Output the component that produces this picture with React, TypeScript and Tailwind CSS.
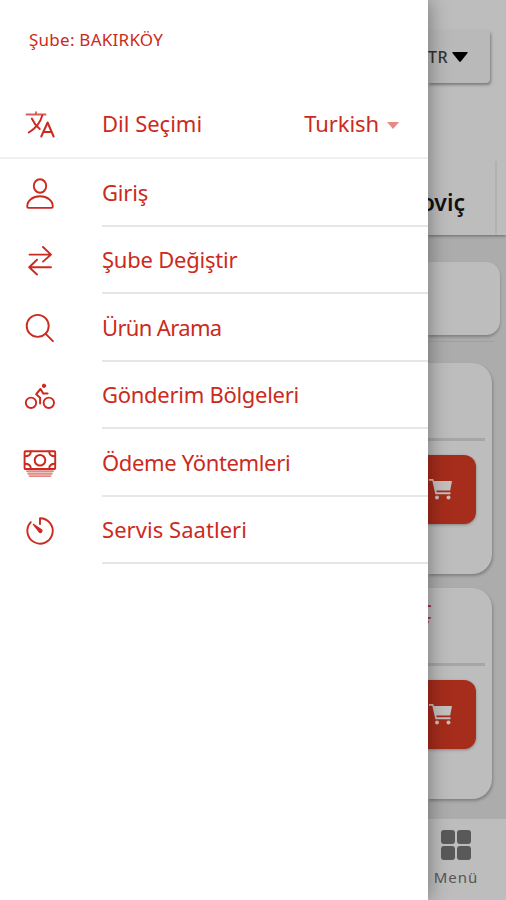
import type { ReactNode } from 'react';

interface MenuItem {
  label: string;
  icon: ReactNode;
  spacing: string;
}

function Icon({ children }: { children: ReactNode }) {
  return (
    <svg
      viewBox="0 0 36 36"
      className="w-9 h-9 shrink-0"
      fill="none"
      stroke="currentColor"
      strokeWidth="1.9"
      strokeLinecap="round"
      strokeLinejoin="round"
    >
      {children}
    </svg>
  );
}

const TranslateIcon = () => (
  <Icon>
    <path d="M4.5 8.5h19M14 6.200v2.300" strokeOpacity="0.75" />
    <path d="M9.800 12.500c2 4.500 4.600 7.700 8 10.500M20.300 9.300c-1.800 7-6.500 13-13.500 17.200" />
    <path d="M19.3 30.5 25.6 16.500l6 14M21.5 26h8.3" strokeWidth="2" />
  </Icon>
);

const PersonIcon = () => (
  <Icon>
    <ellipse cx="18" cy="11" rx="6.2" ry="6.7" />
    <path d="M5.2 31.5C5.2 25.5 10.5 21.3 18 21.3s12.8 4.2 12.8 10.2c0 .9-.5 1.4-1.4 1.4H6.6c-.9 0-1.4-.5-1.4-1.4Z" />
  </Icon>
);

const SwapIcon = () => (
  <Icon>
    <path d="M7.5 12.6h21.5M21 5l8 7.6-8 7M29 25.2H7.2M15 17.7l-7.8 7.5 7.8 7.3" />
  </Icon>
);

const SearchIcon = () => (
  <Icon>
    <circle cx="15.7" cy="15.9" r="11" />
    <path d="m23.7 23.9 7.2 7.2" strokeWidth="2" />
  </Icon>
);

const BicycleIcon = () => (
  <Icon>
    <circle cx="9" cy="25.8" r="5.2" />
    <circle cx="26.8" cy="25.8" r="5.2" />
    <circle cx="22" cy="8.8" r="1.7" fill="currentColor" strokeWidth="1" />
    <path d="m18.500 12-4.300 5.200 3.900 3.500v5.800M18.700 12.200l2.500 4.300h4.400" strokeWidth="2" />
  </Icon>
);

const CashIcon = () => (
  <Icon>
    <rect x="2.6" y="6.2" width="30.6" height="17.8" rx="0.8" />
    <circle cx="18" cy="15.2" r="5.3" strokeWidth="2" />
    <path d="M8.8 6.5c0 3-2.3 4.8-6 4.8M27.2 6.5c0 3 2.3 4.8 6 4.8M8.8 23.6c0-3-2.3-4.8-6-4.8M27.2 23.6c0-3 2.3-4.8 6-4.8" />
    <path d="M5 26.2h26M6.300 28.7h23.400M7.5 31.100h21" strokeWidth="1.9" strokeOpacity="0.55" />
  </Icon>
);

const TimerIcon = () => (
  <Icon>
    <path d="M18 12V6.2a12.7 12.7 0 1 1-9.2 4" />
    <path d="M11.300 12.300 19.500 17.700a1.500 1.500 0 0 1-2.300 2.300Z" fill="currentColor" strokeWidth="1.2" />
  </Icon>
);

const CartIcon = () => (
  <svg viewBox="0 0 24 22" className="w-6 h-[22px] shrink-0" fill="#c4c0bf">
    <path d="M0 0h4.2l.7 2H23l-1.8 9.500H7.300l.4 1.800h13.800v1.900H6.400L3.300 1.800H0Z" />
    <circle cx="8" cy="18.500" r="2" />
    <circle cx="19.500" cy="18.500" r="2" />
  </svg>
);

const items: MenuItem[] = [
  { label: 'Giriş', icon: <PersonIcon />, spacing: 'tracking-[-0.2px]' },
  { label: 'Şube Değiştir', icon: <SwapIcon />, spacing: 'tracking-[-0.23px]' },
  { label: 'Ürün Arama', icon: <SearchIcon />, spacing: 'tracking-[-0.65px]' },
  { label: 'Gönderim Bölgeleri', icon: <BicycleIcon />, spacing: 'tracking-[-0.28px]' },
  { label: 'Ödeme Yöntemleri', icon: <CashIcon />, spacing: 'tracking-[-0.35px]' },
  { label: 'Servis Saatleri', icon: <TimerIcon />, spacing: 'tracking-[0.05px]' },
];

function Drawer() {
  return (
    <nav className="relative z-10 w-[428px] shrink-0 bg-white text-[#cb2a20] shadow-[0_0_20px_rgba(0,0,0,0.4)]">
      <div className="h-[91px] pl-[29px] pt-[28px] text-[17px] leading-6 tracking-[0.25px]">Şube: BAKIRKÖY</div>

      <div className="flex items-center h-[68px] pl-[22px] pr-[29px] border-b-2 border-[#f0f0f0]">
        <TranslateIcon />
        <span className="ml-11 mb-px flex-1 text-[22px]">Dil Seçimi</span>
        <span className="mb-px text-[22px] tracking-[-0.1px]">Turkish</span>
        <svg viewBox="0 0 12 7" className="ml-2 mt-0.5 w-3 h-[7px]" fill="#e58a84">
          <path d="M0 0h12L6 7Z" />
        </svg>
      </div>

      {items.map((item) => (
        <div key={item.label} className="flex items-center h-[67.5px] pl-[22px]">
          {item.icon}
          <div className="ml-11 flex flex-1 items-center h-full pt-px border-b-2 border-[#e6e6e6]">
            <span className={`text-[22px] whitespace-nowrap ${item.spacing}`}>{item.label}</span>
          </div>
        </div>
      ))}
    </nav>
  );
}

function ProductCard({ title }: { title?: string }) {
  return (
    <div className="h-[211px] mr-[14px] rounded-r-[20px] bg-[#bdbdbd] shadow-[1px_2px_3px_rgba(0,0,0,0.25)]">
      <div className="h-[78px] mr-[7px] border-b-3 border-[#a6a6a6] overflow-hidden">
        <div className="flex w-1 justify-end pt-[10px] text-[20px] leading-7 text-[#a01525]">{title}</div>
      </div>
      <div className="flex items-center mt-[14px] w-12 h-[69px] pl-px rounded-r-xl bg-[#a62c1b] shadow-[0_1px_3px_rgba(0,0,0,0.3)]">
        <CartIcon />
      </div>
    </div>
  );
}

function Page() {
  return (
    <main className="flex flex-1 flex-col min-w-0 overflow-hidden bg-[#acacac]">
      <header className="h-[235px] shrink-0 bg-[#bdbdbd] pt-[30px] shadow-[0_1px_3px_rgba(0,0,0,0.4)]">
        <div className="flex items-center justify-end w-[62px] h-[53px] pr-[22px] rounded-r bg-[#b9b9ba] shadow-[1px_2px_3px_rgba(0,0,0,0.35)]">
          <span className="text-base font-medium tracking-[0.5px] text-[#333]">TR</span>
          <svg viewBox="0 0 16 10" className="ml-1 w-4 h-2.5 shrink-0" fill="#000">
            <path d="M1 0h14q1 0 .6 1L9 9.300q-1 1-2 0L.4 1Q0 0 1 0Z" />
          </svg>
        </div>
        <div className="flex items-center justify-end mt-[78px] w-[69px] h-[74px] pr-[30px] pt-2 border-r-2 border-[#b2b2b2] text-[23px] font-semibold text-[#111]">
          oviç
        </div>
      </header>

      <div className="flex flex-1 flex-col gap-[14px] pt-[27px]">
        <div className="h-[73px] mr-1.5 rounded-r-[14px] bg-[#bdbdbd] shadow-[0_2px_3px_rgba(0,0,0,0.25)]" />
        <div className="-mt-2 h-2 mr-3 border-t border-[#a0a0a0]" />
        <ProductCard />
        <ProductCard title="Ç" />
      </div>

      <footer className="flex flex-col items-center h-[80px] w-14 box-content pr-[22px] pt-px bg-[#bdbdbd]">
        <div className="grid grid-cols-2 gap-[2px] mt-[10px] w-[30px] h-[30px]">
          <span className="rounded-[3px] bg-[#595959]" />
          <span className="rounded-[3px] bg-[#595959]" />
          <span className="rounded-[3px] bg-[#595959]" />
          <span className="rounded-[3px] bg-[#595959]" />
        </div>
        <span className="mt-[5px] text-[15px] leading-6 tracking-[1px] text-[#555]">Menü</span>
      </footer>
    </main>
  );
}

export default function App() {
  return (
    <div className="flex w-[506px] h-[900px] overflow-hidden font-['Noto_Sans',sans-serif]">
      <Drawer />
      <Page />
    </div>
  );
}
